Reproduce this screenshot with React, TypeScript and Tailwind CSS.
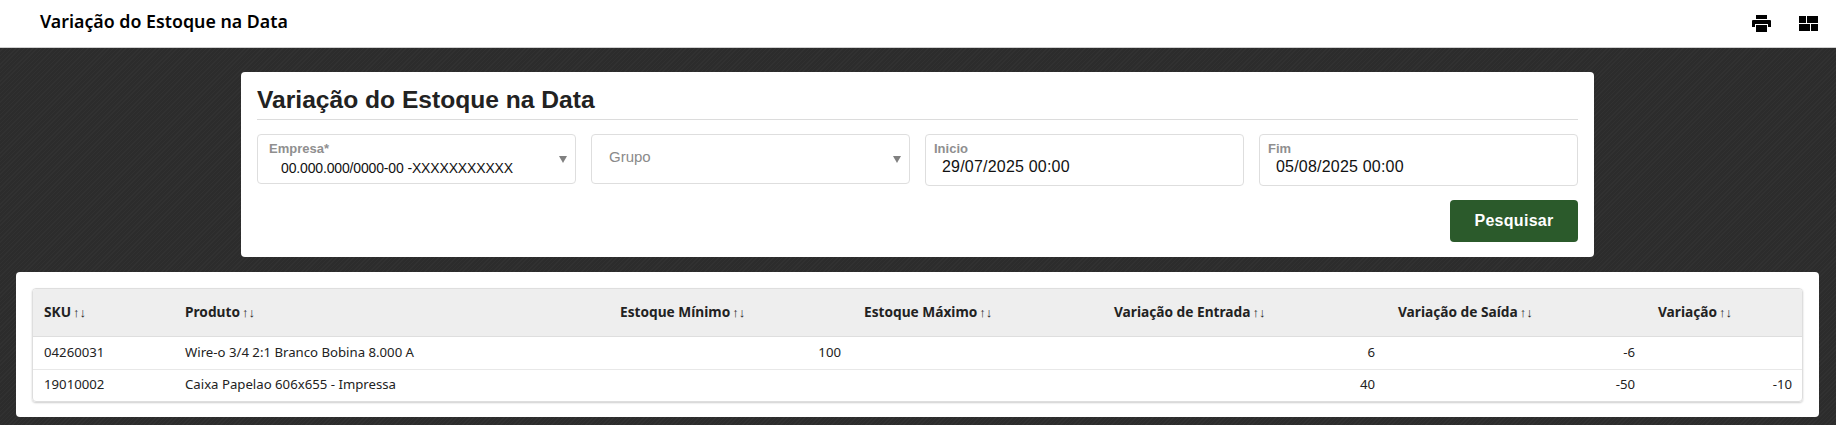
const sortIcon = <span className="ml-[2px] text-[13px] font-normal">↑↓</span>;

const columns = [
  { label: 'SKU', width: 'w-[141px]' },
  { label: 'Produto', width: 'w-[435px]' },
  { label: 'Estoque Mínimo', width: 'w-[244px]' },
  { label: 'Estoque Máximo', width: 'w-[250px]' },
  { label: 'Variação de Entrada', width: 'w-[284px]' },
  { label: 'Variação de Saída', width: 'w-[260px]' },
  { label: 'Variação', width: 'w-[157px]' },
];

const rows = [
  { sku: '04260031', produto: 'Wire-o 3/4 2:1 Branco Bobina 8.000 A', min: '100', max: '', entrada: '6', saida: '-6', variacao: '' },
  { sku: '19010002', produto: 'Caixa Papelao 606x655 - Impressa', min: '', max: '', entrada: '40', saida: '-50', variacao: '-10' },
];

function PrintIcon() {
  return (
    <svg width="19" height="17" viewBox="0 0 19 17" fill="#000">
      <path d="M4 0h11v4H4z" />
      <path d="M1 5h17a1 1 0 0 1 1 1v6h-3V9H3v3H0V6a1 1 0 0 1 1-1z" />
      <path d="M4 10h11v7H4z" />
    </svg>
  );
}

function LayoutIcon() {
  return (
    <svg width="19" height="15" viewBox="0 0 19 15" fill="#000">
      <path d="M0 0h7v7H0zM8 0h11v7H8zM0 8h11v7H0zM12 8h7v7h-7z" />
    </svg>
  );
}

function SelectField({ label, value }: { label?: string; value: string }) {
  return (
    <div className="relative h-[50px] rounded border border-[#dedede] bg-white">
      {label ? (
        <>
          <div className="pl-[11px] pt-[6px] text-[13px] leading-[16px] font-bold text-[#8f8f8f]">{label}</div>
          <div className="pl-[23px] pt-[3px] text-sm leading-[17px] tracking-[-0.15px] text-[#111]">{value}</div>
        </>
      ) : (
        <div className="pl-[17px] pt-[12px] text-[15px] leading-[20px] text-[#8a8a8a]">{value}</div>
      )}
      <span className="absolute right-[8px] top-[21px] h-0 w-0 border-x-[4px] border-t-[7px] border-x-transparent border-t-[#808080]" />
    </div>
  );
}

function DateField({ label, value }: { label: string; value: string }) {
  return (
    <div className="h-[52px] rounded border border-[#dedede] bg-white">
      <div className="pl-[8px] pt-[6px] text-[13px] leading-[16px] font-bold text-[#8f8f8f]">{label}</div>
      <div className="pl-[16px] text-base leading-[20px] tracking-[0.2px] text-[#111]">{value}</div>
    </div>
  );
}

export default function App() {
  return (
    <div className="h-[425px] overflow-hidden bg-[#2e2e2e] bg-[repeating-linear-gradient(135deg,#313131_0px,#313131_1px,#2c2c2c_1px,#2c2c2c_3px)] font-['Liberation_Sans',sans-serif]">
      <header className="flex h-[48px] items-center justify-between border-b border-[#d0d0d0] bg-white pb-[4px] pl-[40px] pr-[18px]">
        <h2 className="font-['Noto_Sans',sans-serif] text-[17.8px] font-semibold text-black">Variação do Estoque na Data</h2>
        <div className="flex items-center gap-[28px] pt-[4px]">
          <PrintIcon />
          <LayoutIcon />
        </div>
      </header>

      <main className="pt-[24px]">
        <section className="ml-[241px] h-[185px] w-[1353px] rounded bg-white px-[16px]">
          <h1 className="border-b border-[#dcdcdc] pt-[13px] pb-[4px] text-[24.6px] leading-[30px] font-bold text-[#222]">Variação do Estoque na Data</h1>
          <div className="mt-[14px] grid grid-cols-4 items-start gap-x-[15px]">
            <SelectField label="Empresa*" value="00.000.000/0000-00 -XXXXXXXXXXX" />
            <SelectField value="Grupo" />
            <DateField label="Inicio" value="29/07/2025 00:00" />
            <DateField label="Fim" value="05/08/2025 00:00" />
          </div>
          <div className="mt-[14px] flex justify-end">
            <button className="h-[42px] w-[128px] rounded bg-[#2b5a2b] text-base font-bold tracking-[0.3px] text-white">Pesquisar</button>
          </div>
        </section>

        <section className="mt-[15px] ml-[16px] w-[1803px] rounded bg-white p-[16px] pb-[15px]">
          <div className="overflow-hidden rounded border border-[#dedede] shadow-[0_1px_2px_rgba(0,0,0,0.2)]">
            <table className="w-full table-fixed border-collapse font-['Noto_Sans',sans-serif] text-[13.2px] text-[#222]">
              <colgroup>
                {columns.map(c => <col key={c.label} className={c.width} />)}
              </colgroup>
              <thead className="bg-[#eeeeee]">
                <tr className="h-[47px] border-b border-[#dedede]">
                  {columns.map(c => (
                    <th key={c.label} className="pr-[12px] pl-[11px] text-left text-[13.7px] font-bold">{c.label}{sortIcon}</th>
                  ))}
                </tr>
              </thead>
              <tbody>
                {rows.map((r, i) => (
                  <tr key={r.sku} className={i === 0 ? 'h-[33px] border-b border-[#e8e8e8]' : 'h-[32px]'}>
                    <td className="pr-[12px] pl-[11px]">{r.sku}</td>
                    <td className="pr-[12px] pl-[11px]">{r.produto}</td>
                    <td className="px-[12px] text-right">{r.min}</td>
                    <td className="px-[12px] text-right">{r.max}</td>
                    <td className="px-[12px] text-right">{r.entrada}</td>
                    <td className="px-[12px] text-right">{r.saida}</td>
                    <td className="px-[12px] text-right">{r.variacao}</td>
                  </tr>
                ))}
              </tbody>
            </table>
          </div>
        </section>
      </main>
    </div>
  );
}
